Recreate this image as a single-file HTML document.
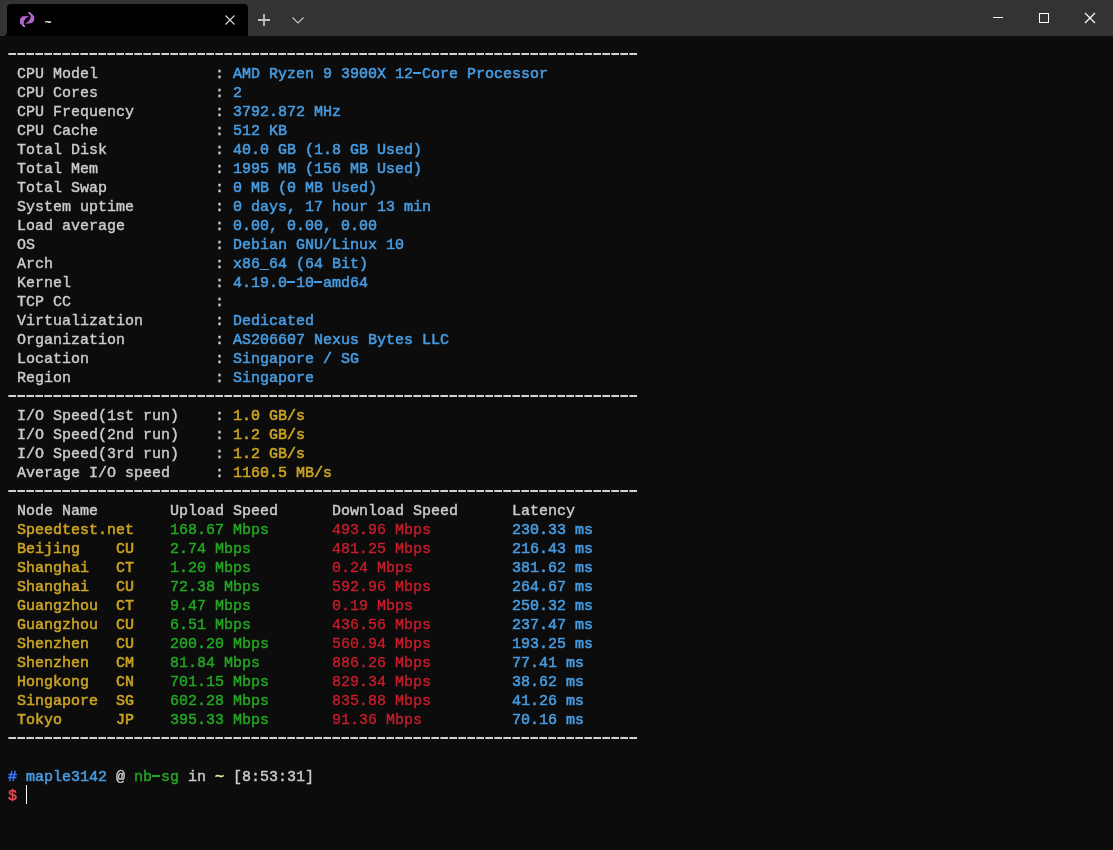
<!DOCTYPE html>
<html><head><meta charset="utf-8"><title>~</title>
<style>
html,body{margin:0;padding:0;}
body{width:1113px;height:850px;background:#0c0c0c;overflow:hidden;position:relative;font-family:"Liberation Sans",sans-serif;}
#bar{position:absolute;left:0;top:0;width:1113px;height:36px;background:#333333;}
#tab{position:absolute;left:7px;top:4px;width:241px;height:32px;background:#000;border-radius:4px 4px 0 0;}
#tab:before{content:"";position:absolute;left:-4px;bottom:0;width:4px;height:4px;background:radial-gradient(circle at 0 0,rgba(0,0,0,0) 3.5px,#000 4.5px);}
#sep{position:absolute;left:4px;top:5px;width:1px;height:27px;background:#3c3c3c;}
#title{-webkit-text-stroke:0.3px;will-change:transform;position:absolute;left:45px;top:14px;font-size:11px;color:#fff;line-height:16px;}
svg{position:absolute;overflow:visible;}
#term{will-change:transform;position:absolute;left:8px;top:46px;margin:0;font-family:"Liberation Mono",monospace;font-size:15px;line-height:19px;color:#cccccc;white-space:pre;letter-spacing:-0.0015px;-webkit-text-stroke:0.4px;}
.h{display:inline-block;width:9px;height:2px;vertical-align:4px;background:linear-gradient(to right,currentColor 0,currentColor 8px,rgba(0,0,0,0) 8px);}
#term b{font-weight:normal;-webkit-text-stroke:0.55px;}
.c{color:#479be0}.y{color:#caa322}.g{color:#24a623}.r{color:#ca1d2c}
#term .g{-webkit-text-stroke-width:0.45px}#term .r{-webkit-text-stroke-width:0.35px}
.bb{color:#3b78ff}.by{color:#f9f1a5}.br{color:#e74856}
.d{position:absolute;left:8px;width:630px;height:2px;background:repeating-linear-gradient(to right,rgba(204,204,204,.7) 0,rgba(204,204,204,.7) 1px,#d0d0d0 1px,#d0d0d0 8px,rgba(0,0,0,0) 8px,rgba(0,0,0,0) 9px);}
#cur{position:absolute;left:26px;top:785px;width:1px;height:19px;background:#fff;}
</style></head><body>
<div id="bar">
 <div id="sep"></div>
 <div id="tab"></div>
 <svg id="ico" style="left:0;top:0" width="60" height="36" viewBox="0 0 60 36">
  <path d="M28.0 12.1 C30.2 12.5 32.7 14.0 34.2 16.5 L34.2 20.4 C33.0 22.6 31.0 23.7 24.9 23.7 C27.9 22.0 30.0 19.8 30.6 17.4 C30.9 15.6 29.8 13.9 28.0 12.1 Z" fill="#b062d0"/>
  <path d="M25.4 27.0 C23.0 26.1 20.8 24.4 19.9 23.3 L19.9 19.3 C20.9 17.6 22.0 16.5 23.1 16.2 L29.1 16.1 C26.6 17.4 24.4 19.6 23.8 22.0 C23.5 23.7 24.0 25.2 25.4 27.0 Z" fill="#b062d0"/>
  <path d="M28.0 12.1 C29.2 12.3 30.4 12.9 31.0 13.6 L29.6 14.0 Z" fill="#e6c2f2"/>
  <path d="M25.4 27.0 C24.2 26.7 23.0 26.1 22.3 25.4 L24.0 25.0 Z" fill="#e6c2f2"/>
 </svg>
 <div id="title">~</div>
 <svg style="left:225px;top:15px" width="10" height="10" viewBox="0 0 10 10"><path d="M0.5 0.5 L9.5 9.5 M9.5 0.5 L0.5 9.5" stroke="#d4d4d4" stroke-width="1.15" fill="none"/></svg>
 <svg style="left:258px;top:14px" width="12" height="12" viewBox="0 0 12 12"><path d="M6 0 V12 M0 6 H12" stroke="#c4c4c4" stroke-width="1.8" fill="none"/></svg>
 <svg style="left:292px;top:17px" width="12" height="7" viewBox="0 0 12 7"><path d="M0.5 0.5 L6 6 L11.5 0.5" stroke="#c8c8c8" stroke-width="1.1" fill="none"/></svg>
 <svg style="left:993px;top:17px" width="10" height="1" viewBox="0 0 10 1"><path d="M0 0.5 H10" stroke="#fff" stroke-width="1" fill="none"/></svg>
 <svg style="left:1039px;top:13px" width="10" height="10" viewBox="0 0 10 10"><rect x="0.5" y="0.5" width="9" height="9" stroke="#fff" stroke-width="1" fill="none"/></svg>
 <svg style="left:1085px;top:13px" width="10" height="10" viewBox="0 0 10 10"><path d="M0 0 L10 10 M10 0 L0 10" stroke="#fff" stroke-width="1.15" fill="none"/></svg>
</div>
<pre id="term"> 
 CPU Model             : <b class="c">AMD Ryzen 9 3900X 12<i class="h"></i>Core Processor</b>
 CPU Cores             : <b class="c">2</b>
 CPU Frequency         : <b class="c">3792.872 MHz</b>
 CPU Cache             : <b class="c">512 KB</b>
 Total Disk            : <b class="c">40.0 GB (1.8 GB Used)</b>
 Total Mem             : <b class="c">1995 MB (156 MB Used)</b>
 Total Swap            : <b class="c">0 MB (0 MB Used)</b>
 System uptime         : <b class="c">0 days, 17 hour 13 min</b>
 Load average          : <b class="c">0.00, 0.00, 0.00</b>
 OS                    : <b class="c">Debian GNU/Linux 10</b>
 Arch                  : <b class="c">x86_64 (64 Bit)</b>
 Kernel                : <b class="c">4.19.0<i class="h"></i>10<i class="h"></i>amd64</b>
 TCP CC                : <b class="c"></b>
 Virtualization        : <b class="c">Dedicated</b>
 Organization          : <b class="c">AS206607 Nexus Bytes LLC</b>
 Location              : <b class="c">Singapore / SG</b>
 Region                : <b class="c">Singapore</b>
 
 I/O Speed(1st run)    : <b class="y">1.0 GB/s</b>
 I/O Speed(2nd run)    : <b class="y">1.2 GB/s</b>
 I/O Speed(3rd run)    : <b class="y">1.2 GB/s</b>
 Average I/O speed     : <b class="y">1160.5 MB/s</b>
 
 Node Name        Upload Speed      Download Speed      Latency
 <b class="y">Speedtest.net    </b><b class="g">168.67 Mbps       </b><b class="r">493.96 Mbps         </b><b class="c">230.33 ms</b>
 <b class="y">Beijing    CU    </b><b class="g">2.74 Mbps         </b><b class="r">481.25 Mbps         </b><b class="c">216.43 ms</b>
 <b class="y">Shanghai   CT    </b><b class="g">1.20 Mbps         </b><b class="r">0.24 Mbps           </b><b class="c">381.62 ms</b>
 <b class="y">Shanghai   CU    </b><b class="g">72.38 Mbps        </b><b class="r">592.96 Mbps         </b><b class="c">264.67 ms</b>
 <b class="y">Guangzhou  CT    </b><b class="g">9.47 Mbps         </b><b class="r">0.19 Mbps           </b><b class="c">250.32 ms</b>
 <b class="y">Guangzhou  CU    </b><b class="g">6.51 Mbps         </b><b class="r">436.56 Mbps         </b><b class="c">237.47 ms</b>
 <b class="y">Shenzhen   CU    </b><b class="g">200.20 Mbps       </b><b class="r">560.94 Mbps         </b><b class="c">193.25 ms</b>
 <b class="y">Shenzhen   CM    </b><b class="g">81.84 Mbps        </b><b class="r">886.26 Mbps         </b><b class="c">77.41 ms</b>
 <b class="y">Hongkong   CN    </b><b class="g">701.15 Mbps       </b><b class="r">829.34 Mbps         </b><b class="c">38.62 ms</b>
 <b class="y">Singapore  SG    </b><b class="g">602.28 Mbps       </b><b class="r">835.88 Mbps         </b><b class="c">41.26 ms</b>
 <b class="y">Tokyo      JP    </b><b class="g">395.33 Mbps       </b><b class="r">91.36 Mbps          </b><b class="c">70.16 ms</b>
 

<b class="bb">#</b> <b class="c">maple3142</b> @ <b class="g">nb<i class="h"></i>sg</b> in <b class="by">~</b> [8:53:31]
<b class="br">$</b> </pre>
<div class="d" style="top:53px"></div><div class="d" style="top:395px"></div><div class="d" style="top:490px"></div><div class="d" style="top:737px"></div>
<div id="cur"></div>
</body></html>
